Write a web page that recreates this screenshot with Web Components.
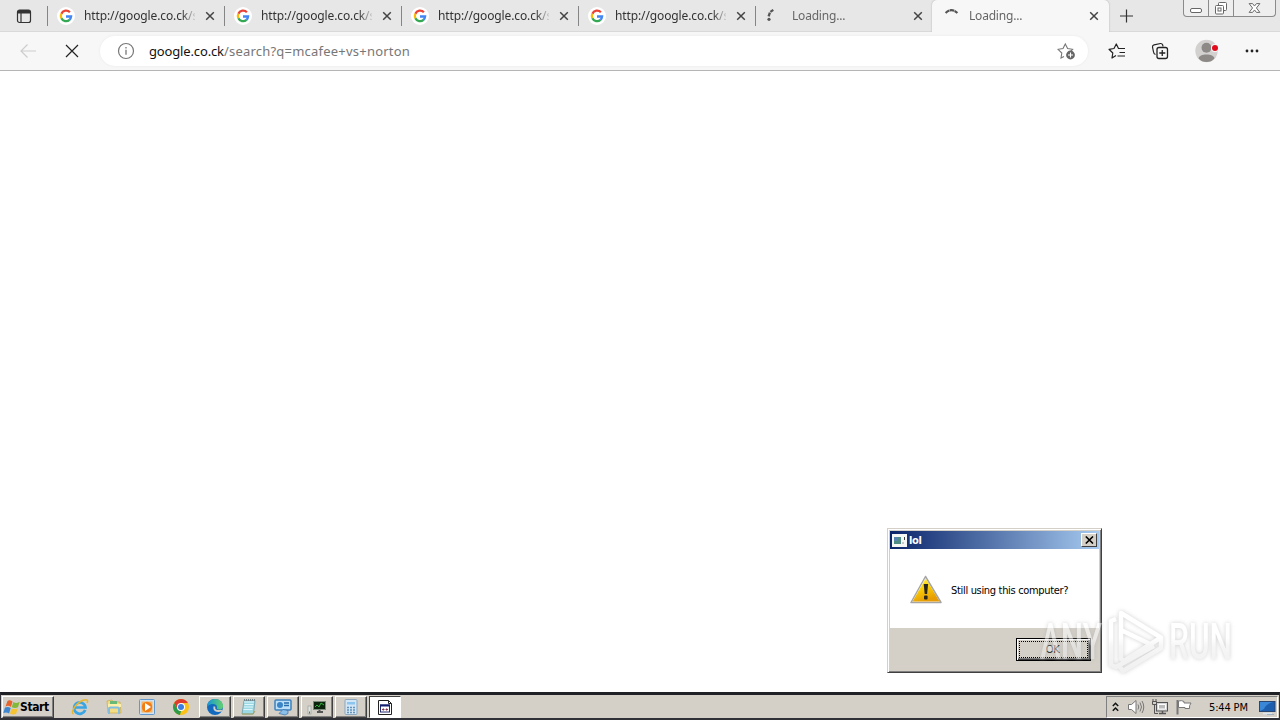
<!DOCTYPE html>
<html lang="en">
<head>
<meta charset="UTF-8">
<title>Loading...</title>
<style>
    html, body {
        margin: 0;
        width: 1280px;
        height: 720px;
        overflow: hidden;
        background: #fff;
    }
</style>
</head>
<body>
<desktop-screen>
    <edge-browser>
        <tab-strip slot="tabs">
            <browser-tab icon="google">http://google.co.ck/s</browser-tab>
            <browser-tab icon="google">http://google.co.ck/s</browser-tab>
            <browser-tab icon="google">http://google.co.ck/s</browser-tab>
            <browser-tab icon="google">http://google.co.ck/s</browser-tab>
            <browser-tab icon="spinA" loading>Loading...</browser-tab>
            <browser-tab icon="spinB" loading active>Loading...</browser-tab>
        </tab-strip>
        <address-bar slot="toolbar" data-host="google.co.ck" data-path="/search?q=mcafee+vs+norton"></address-bar>
    </edge-browser>
    <message-box slot="window" caption="lol" button="OK">Still using this computer?</message-box>
    <any-watermark slot="window"></any-watermark>
    <task-bar slot="taskbar"></task-bar>
</desktop-screen>

<script>
const ICONS = {
    tabActions: [16, 16, `<rect x="1.5" y="2" width="13" height="12.5" rx="2" fill="none" stroke="#333" stroke-width="1.2"/><path d="M1.5 5.5V4a2 2 0 0 1 2-2h9a2 2 0 0 1 2 2v1.5z" fill="#333"/><path d="M5 5v9" stroke="#333" stroke-width="1.2"/>`],
    google: [18, 18, `<circle cx="9" cy="9" r="9" fill="#fff"/><g fill="none" stroke-width="2.3"><path d="M12.9 5.3A5.1 5.1 0 0 0 4.4 6.8" stroke="#ea4335"/><path d="M4.4 6.8a5.1 5.1 0 0 0 0 4.5" stroke="#fbbc05"/><path d="M4.4 11.2a5.1 5.1 0 0 0 8.1 1.6" stroke="#34a853"/><path d="M12.4 12.9a5 5 0 0 0 1.7-3.4H9" stroke="#4285f4"/></g>`],
    spinA: [18, 18, `<path d="M8.3 2.9L5.4 4.9M4.9 5.600L3.600 9.300" stroke="#555" stroke-width="2.3" fill="none"/><circle cx="4" cy="12.300" r="1.600" fill="#555"/>`],
    spinB: [18, 18, `<path d="M3.6 6Q9.500 .4 15.400 6" stroke="#555" stroke-width="2.2" fill="none" stroke-dasharray="4.500 .4"/>`],
    close: [10, 10, `<path d="M1.2 1.2l7.6 7.6M8.8 1.2L1.2 8.8" stroke="#444" stroke-width="1.5"/>`],
    plus: [14, 14, `<path d="M6.500 .5v13M0 7h13" stroke="#333" stroke-width="1.2"/>`],
    back: [18, 16, `<path d="M17 8H2M8.5 1.5L2 8l6.500 6.500" stroke="#cdcdcd" stroke-width="1.2" fill="none"/>`],
    stop: [14, 14, `<path d="M1 1l12 12M13 1L1 13" stroke="#222" stroke-width="1.2"/>`],
    info: [18, 18, `<circle cx="9" cy="9" r="7.5" fill="none" stroke="#777" stroke-width="1.2"/><path d="M9 7.8v5M9 5v1.500" stroke="#777" stroke-width="1.3"/>`],
    starAdd: [18, 18, `<path d="M7 14.500L4 16l.8-5L1 7.300l5-.8L8.300 2l2.300 4.500 5 .8-2 2" fill="none" stroke="#777" stroke-width="1.1"/><circle cx="13.500" cy="13" r="4.400" fill="#666"/><path d="M13.500 10.500v5M11 13h5" stroke="#fff" stroke-width="1.1"/>`],
    favorites: [18, 18, `<path d="M8 13.500L4 16l.8-5L1 7.300l5-.8L8.300 2l2.200 4.500H17M11.500 10.500H17M9.500 14H17" fill="none" stroke="#222" stroke-width="1.2" stroke-linejoin="round"/>`],
    collections: [18, 18, `<path d="M4.500 12.500C3 12 2.600 11 2.400 9.500L1.500 5c-.1-1.200.5-2 1.500-2.200L9.500 1.500c1.100-.1 1.800.4 2.200 1.500l.3 1.500" fill="none" stroke="#222" stroke-width="1.2"/><rect x="6" y="5.500" width="10.500" height="11" rx="2" fill="none" stroke="#222" stroke-width="1.3"/><path d="M11.250 8v6M8.300 11h6" stroke="#222" stroke-width="1.3"/>`],
    profile: [24, 24, `<circle cx="11.500" cy="12" r="11.200" fill="#d3d1cf"/><circle cx="11.500" cy="8.800" r="5" fill="#8c8987"/><path d="M3.600 19.600C3.600 14 19.400 14 19.400 19.600Q16.400 23.100 11.500 23.100T3.600 19.600z" fill="#8c8987"/><circle cx="20" cy="9" r="4" fill="#f7f7f7"/><circle cx="20" cy="9" r="3" fill="#e00b1c"/>`],
    more: [16, 4, `<g fill="#222"><circle cx="3" cy="2" r="1.400"/><circle cx="8" cy="2" r="1.400"/><circle cx="13" cy="2" r="1.400"/></g>`],
    // classic dialog
    dialogApp: [15, 13, `<path d="M0 0h15v13H0z" fill="#f5f7f5"/><path d="M2 3h7v7H2z" fill="#508c86"/><path d="M2 3h4v4H2z" fill="#5783b0"/><path d="M12.500 3v3M10.500 9h1" stroke="#444"/>`],
    dialogClose: [9, 8, `<path d="M.8 .5L8 7.500M8 .5L.8 7.500" stroke="#000" stroke-width="1.6"/>`],
    warning: [32, 30, `<defs><linearGradient id="w" y1="0" y2="1" x2=".4"><stop stop-color="#fff36d"/><stop offset=".45" stop-color="#fcd408"/><stop offset="1" stop-color="#e79c05"/></linearGradient></defs><path d="M15.500 1.500L1 27.500h30z" fill="#fff" stroke="#a5a5a5" stroke-width="1.500" stroke-linejoin="round"/><path d="M15.700 3.500L2.500 26.500h27z" fill="url(#w)"/><path d="M13.700 9h4.400l-1 10h-2.400z" fill="#29261c"/><rect x="14" y="20.500" width="3.600" height="4" rx="1" fill="#29261c"/>`],
    // taskbar
    windows: [17, 17, `<path d="M4.500 2Q6.500 .5 9.500 2.500L8 8Q5.500 6 2.500 7.500z" fill="#e8622b"/><path d="M10.300 3Q13.500 5 16.700 2.800l-1.700 5.500Q12 9.800 8.800 8.300z" fill="#83b83b"/><path d="M2 8.500Q5 7.200 7.700 8.900l-1.600 5.500Q3.300 12.600.3 14z" fill="#3e86cf"/><path d="M8.500 9.400Q11.500 10.800 14.800 9.200l-1.700 5.500Q10 16.300 7 14.500z" fill="#f6c331"/>`],
    ie: [18, 18, `<path d="M14.200 12A5.700 5.700 0 1 1 14.500 9.500H4.500" fill="none" stroke="#3aa5e3" stroke-width="2.700"/><path d="M2.500 16C-1 14.500 5 5 12 2.300 16 .8 17.500 2.300 16 5" fill="none" stroke="#e8b62d" stroke-width="1.500"/>`],
    explorer: [18, 18, `<path d="M2 3l5-1 1 2h7l1 11H3z" fill="#f3dc83" stroke="#c9a745" stroke-width=".7"/><path d="M5 3h7v3H5z" fill="#69b977"/><path d="M3 6h13v3H3z" fill="#fff0a9"/><path d="M4 16v-5q0-1.500 1.500-1.500h7q1.500 0 1.500 1.500v5" fill="none" stroke="#82bde2" stroke-width="2"/>`],
    media: [18, 18, `<rect x="1.500" y="1.500" width="15" height="15" rx="1" fill="#cfe3f5" stroke="#6199ce"/><rect x="3.500" y="3.500" width="11" height="11" fill="#f9b35c"/><circle cx="9" cy="9" r="5.200" fill="#f07d16"/><path d="M7 5l6 4-6 4z" fill="#fff"/>`],
    chrome: [18, 18, `<circle cx="9" cy="9" r="8" fill="#fbc116"/><path d="M2.100 5A8 8 0 0 1 15.900 5H9L5.500 11z" fill="#df3c2f"/><path d="M2.100 5L5.500 11 9 13l-1 4A8 8 0 0 1 2.100 5z" fill="#2b9b4b"/><circle cx="9" cy="9" r="4" fill="#fff"/><circle cx="9" cy="9" r="3" fill="#3b7de0"/>`],
    edge: [18, 18, `<defs><linearGradient id="e"><stop stop-color="#1794d7"/><stop offset="1" stop-color="#64d36b"/></linearGradient></defs><circle cx="9" cy="9" r="8" fill="#1269bd"/><path d="M1 9C1 4.500 4.500 1 9 1c5 0 8 3.500 8 7 0 3-2.500 4-5 3.500-1.700-.4-1-1.500-1-2.500 0-2-2-3-4-3-3 0-5 1.500-6 3z" fill="url(#e)"/><path d="M8.500 8.500C7.500 12 10 14 16 12.500" stroke="#d4d0c8" stroke-width="1.800" fill="none"/>`],
    notepad: [18, 18, `<path d="M4 2.500h11L13.500 16H2z" fill="#9dd8e5" stroke="#6a9eac" stroke-width=".8"/><path d="M4 4h10M4.500 6.500h9M4 9h9M3.500 11.500h9" stroke="#dff7fb"/><path d="M4 2h11" stroke="#70858c" stroke-width="2" stroke-dasharray="1 1"/><path d="M2 16h11l2-3" stroke="#a8a15f" fill="none"/>`],
    control: [20, 18, `<rect x="2" y="2" width="16" height="10" rx="1" fill="#bce0f7" stroke="#3e80bd" stroke-width="1.500"/><circle cx="7" cy="7" r="3" fill="#3b84c7"/><path d="M11 5h5M11 7.500h5" stroke="#246cad" stroke-width="1.300"/><path d="M6 15.500l4-4 5 1v3l-3 1.500z" fill="#8bc0ea" stroke="#396fa4" stroke-width=".7"/>`],
    monitor: [20, 18, `<rect x="6.500" y="3.500" width="12" height="8" fill="#0b230d" stroke="#7b8b7b"/><path d="M8 9l2-2 2 2 2-4 3 2" fill="none" stroke="#2eb33a"/><path d="M10 14h6M12.500 12v2" stroke="#555" stroke-width="2"/><rect x="1" y="8" width="3" height="8" fill="#e0e5df" stroke="#8d958c" stroke-width=".6"/><path d="M2 14.500h1" stroke="#19982c" stroke-width="2"/>`],
    calc: [16, 18, `<rect x="2" y="1.500" width="12" height="15" rx="1" fill="#d3e6f5" stroke="#8aa7be"/><path d="M4 4h8v2.500H4z" fill="#8bc5ee"/><path d="M4 9.500h8M4 12h8M4 14.500h8" stroke="#6294bd" stroke-width="1.500" stroke-dasharray="2 1"/>`],
    script: [16, 18, `<path d="M1.500 2.500h10l3 3v11h-13z" fill="#fff" stroke="#222"/><path d="M11.500 2.500v3h3" fill="none" stroke="#222"/><rect x="3.500" y="7" width="9" height="7" fill="#fff" stroke="#222b70"/><path d="M3 7.500h10" stroke="#15216f" stroke-width="2"/><path d="M5 11.500h2.500M8.500 11.500H11M6.300 10.300v2.400M9.700 10.300v2.400" stroke="#803048" stroke-width=".9"/>`],
    chevrons: [7, 10, `<path d="M.8 4l2.700-2.700L6.200 4M.8 8.700L3.500 6l2.700 2.700" fill="none" stroke="#111" stroke-width="1.500"/>`],
    sound: [18, 16, `<path d="M1.500 5.500h3L9 1.500v13L4.500 10.500h-3z" fill="#fff" stroke="#777"/><path d="M11 5.500q1.500 2.500 0 5M13 3.500q3 4.500 0 9M15 2q3.500 6 0 12" fill="none" stroke="#777" stroke-width="1"/>`],
    network: [18, 18, `<rect x="5.500" y="4.500" width="11" height="8.500" fill="#d6d6d6" stroke="#555"/><path d="M7.500 6.500h7V11h-7z" fill="#bbb" stroke="#fff"/><path d="M8 15.500h7M11.500 13v2" stroke="#555" stroke-width="1.500"/><path d="M2 1v3M5 1v3M1.500 3.500h4v3h-4zM3.500 6.500v9H7" fill="none" stroke="#555"/>`],
    flag: [18, 16, `<path d="M2.500 1v14.500" stroke="#777" stroke-width="2"/><path d="M3.500 2q3-1 5.500.5V4h7q-2 2.500-1.500 5.500H10V8.500H3.500z" fill="#fff" stroke="#777"/>`],
    showDesktop: [17, 15, `<rect x=".5" y="1.500" width="15.500" height="10" fill="#1d5fae" stroke="#2b4771"/><path d="M1 2h13Q7 4 5 9L1 11z" fill="#3a86d7"/><path d="M4 13.500h9" stroke="#dfe8f2" stroke-width="1.500"/><path d="M8 15h7" stroke="#6c8fb9"/>`]
};

class UiIcon extends HTMLElement {
    constructor() {
        super();
        this.attachShadow({ mode: "open" });
    }

    connectedCallback() {
        const [w, h, body] = ICONS[this.getAttribute("name")];
        this.shadowRoot.innerHTML = `
            <style>
                :host { display: inline-flex; flex: none; }
                svg { display: block; }
            </style>
            <svg width="${w}" height="${h}" viewBox="0 0 ${w} ${h}">${body}</svg>
        `;
    }
}

class DesktopScreen extends HTMLElement {
    constructor() {
        super();
        this.attachShadow({ mode: "open" });
        this.shadowRoot.innerHTML = `
            <style>
                :host {
                    display: flex;
                    flex-direction: column;
                    position: relative;
                    width: 1280px;
                    height: 720px;
                    background: #fff;
                    font-family: "DejaVu Sans Condensed", "DejaVu Sans", sans-serif;
                }
                .work { flex: 1; min-height: 0; }
            </style>
            <div class="work"><slot></slot></div>
            <slot name="taskbar"></slot>
            <slot name="window"></slot>
        `;
    }
}

class EdgeBrowser extends HTMLElement {
    constructor() {
        super();
        this.attachShadow({ mode: "open" });
        this.shadowRoot.innerHTML = `
            <style>
                :host {
                    display: flex;
                    flex-direction: column;
                    height: 100%;
                    font-family: "Noto Sans", "Open Sans", sans-serif;
                }
                main { flex: 1; background: #fff; }
            </style>
            <slot name="tabs"></slot>
            <slot name="toolbar"></slot>
            <main></main>
        `;
    }
}

class TabStrip extends HTMLElement {
    constructor() {
        super();
        this.attachShadow({ mode: "open" });
        this.shadowRoot.innerHTML = `
            <style>
                :host {
                    display: flex;
                    height: 32px;
                    background: #e7e7e7;
                    box-shadow: inset 0 -1px #d9d9d9;
                }
                .actions {
                    width: 47px;
                    display: flex;
                    align-items: center;
                    justify-content: center;
                }
                .new-tab { margin: 9px 0 0 11px; }
                .caption {
                    display: flex;
                    box-sizing: border-box;
                    width: 93px;
                    height: 17px;
                    margin-left: auto;
                    margin-right: 4px;
                    border: 1px solid #8b8b8b;
                    border-top: 0;
                    border-radius: 0 0 4px 4px;
                    background: #eee;
                }
                .caption span { flex: 0 0 24px; border-right: 1px solid #8b8b8b; }
                .caption span:last-child { flex: 1; border: 0; }
                .caption svg { display: block; width: 100%; height: 16px; }
            </style>
            <div class="actions"><ui-icon name="tabActions"></ui-icon></div>
            <slot></slot>
            <ui-icon class="new-tab" name="plus"></ui-icon>
            <div class="caption">
                <span><svg viewBox="0 0 24 16"><rect x="6.500" y="8.500" width="11" height="4" rx="1.500" fill="#fff" stroke="#666"/></svg></span>
                <span><svg viewBox="0 0 24 16"><g fill="#fff" stroke="#666"><rect x="9.500" y="2.500" width="8" height="8" rx="1"/><rect x="6.500" y="5.500" width="8" height="8.500" rx="1"/><rect x="9" y="8" width="3" height="3"/></g></svg></span>
                <span><svg viewBox="0 0 42 16"><path d="M15.500 3.500h3.500l2 2.500 2-2.500h3.500L23 8l3.500 4.500H23L21 10l-2 2.500h-3.500L19 8z" fill="#fff" stroke="#666"/></svg></span>
            </div>
        `;
    }
}

class BrowserTab extends HTMLElement {
    constructor() {
        super();
        this.attachShadow({ mode: "open" });
    }

    connectedCallback() {
        this.shadowRoot.innerHTML = `
            <style>
                :host {
                    display: flex;
                    align-items: center;
                    box-sizing: border-box;
                    flex: none;
                    width: 177px;
                    height: 32px;
                    padding: 0 9px 0 10px;
                    color: #333;
                    font-size: 12px;
                    background: linear-gradient(#858585, #858585) 0 6px / 1px 20px no-repeat;
                }
                :host([loading]) { color: #666; }
                :host([active]) {
                    background: #f7f7f7;
                    border-radius: 5px 5px 0 0;
                    box-shadow: 0 0 2px #aaa;
                    clip-path: inset(0 -3px 0 -3px);
                }
                :host([active]) .close { margin-right: 1px; }
                .title {
                    width: 111px;
                    margin-left: 9px;
                    overflow: hidden;
                    white-space: nowrap;
                    line-height: 18px;
                    letter-spacing: -0.12px;
                    mask-image: linear-gradient(90deg, #000 98px, transparent 113px);
                }
                :host([loading]) .title { letter-spacing: -0.2px; }
                .close { margin-left: auto; }
            </style>
            <ui-icon name="${this.getAttribute("icon")}"></ui-icon>
            <div class="title"><slot></slot></div>
            <ui-icon class="close" name="close"></ui-icon>
        `;
    }
}

class AddressBar extends HTMLElement {
    constructor() {
        super();
        this.attachShadow({ mode: "open" });
        this.shadowRoot.innerHTML = `
            <style>
                :host {
                    display: flex;
                    align-items: center;
                    box-sizing: border-box;
                    height: 39px;
                    padding: 0 20px 0 19px;
                    background: #f7f7f7;
                    border-bottom: 1px solid #b5b5b5;
                }
                .stop { margin: 0 21px 0 28px; }
                .field {
                    display: flex;
                    align-items: center;
                    box-sizing: border-box;
                    width: 988px;
                    height: 30px;
                    padding: 0 13px 0 17px;
                    border-radius: 15px;
                    background: #fff;
                    box-shadow: 0 0 3px #e9e9e9;
                }
                .url {
                    margin-left: 14px;
                    color: #777;
                    font-size: 13px;
                    line-height: 20px;
                    white-space: nowrap;
                    letter-spacing: 0.22px;
                }
                .host { color: #111; letter-spacing: -0.15px; }
                .field ui-icon:last-child { margin-left: auto; }
                .buttons {
                    flex: 1;
                    display: flex;
                    align-items: center;
                    justify-content: space-between;
                    margin-left: 20px;
                }
            </style>
            <ui-icon name="back"></ui-icon>
            <ui-icon class="stop" name="stop"></ui-icon>
            <div class="field">
                <ui-icon name="info"></ui-icon>
                <div class="url"><span class="host">${this.dataset.host}</span><span>${this.dataset.path}</span></div>
                <ui-icon name="starAdd"></ui-icon>
            </div>
            <div class="buttons">
                <ui-icon name="favorites"></ui-icon>
                <ui-icon name="collections"></ui-icon>
                <ui-icon name="profile"></ui-icon>
                <ui-icon name="more"></ui-icon>
            </div>
        `;
    }
}

class MessageBox extends HTMLElement {
    constructor() {
        super();
        this.attachShadow({ mode: "open" });
        this.shadowRoot.innerHTML = `
            <style>
                :host {
                    position: absolute;
                    left: 887px;
                    top: 528px;
                    display: flex;
                    flex-direction: column;
                    box-sizing: border-box;
                    width: 215px;
                    height: 145px;
                    padding: 2px;
                    border: 1px solid #d4d0c8;
                    border-right-color: #404040;
                    border-bottom-color: #404040;
                    background: #d4d0c8;
                    box-shadow: inset 1px 1px #fff, inset -1px -1px #808080;
                    font-size: 11px;
                    color: #000;
                }
                header {
                    display: flex;
                    align-items: center;
                    box-sizing: border-box;
                    height: 18px;
                    padding: 0 2px 0 2px;
                    background: linear-gradient(90deg, #0a246a, #a6caf0);
                    color: #fff;
                    font-weight: bold;
                }
                header b { margin-left: 2px; letter-spacing: -0.3px; }
                .close {
                    display: flex;
                    align-items: center;
                    justify-content: center;
                    box-sizing: border-box;
                    width: 16px;
                    height: 14px;
                    margin-left: auto;
                    background: #d4d0c8;
                    border: 1px solid;
                    border-color: #fff #404040 #404040 #fff;
                }
                .body {
                    display: flex;
                    align-items: center;
                    box-sizing: border-box;
                    height: 79px;
                    padding: 3px 0 0 20px;
                    background: #fff;
                }
                .message {
                    margin-left: 9px;
                    white-space: nowrap;
                    letter-spacing: -0.32px;
                }
                footer {
                    display: flex;
                    flex: 1;
                    align-items: center;
                    justify-content: flex-end;
                    padding-right: 8px;
                    background: #d4d0c8;
                }
                button {
                    box-sizing: border-box;
                    width: 75px;
                    height: 23px;
                    padding: 2px;
                    background: #d4d0c8;
                    border: 1px solid #000;
                    box-shadow: inset 1px 1px #fff, inset -1px -1px #404040, inset -2px -2px #808080;
                    font: inherit;
                    color: #000;
                }
                button span {
                    display: block;
                    border: 1px dotted #000;
                    height: 15px;
                    line-height: 15px;
                    padding-right: 2px;
                    letter-spacing: -0.5px;
                }
            </style>
            <header>
                <ui-icon name="dialogApp"></ui-icon>
                <b>${this.getAttribute("caption")}</b>
                <div class="close"><ui-icon name="dialogClose"></ui-icon></div>
            </header>
            <div class="body">
                <ui-icon name="warning"></ui-icon>
                <div class="message"><slot></slot></div>
            </div>
            <footer><button><span>${this.getAttribute("button")}</span></button></footer>
        `;
    }
}

class AnyWatermark extends HTMLElement {
    constructor() {
        super();
        this.attachShadow({ mode: "open" });
        this.shadowRoot.innerHTML = `
            <style>
                :host {
                    position: absolute;
                    left: 1038px;
                    top: 602px;
                    width: 200px;
                    height: 76px;
                    pointer-events: none;
                    opacity: 0.55;
                    filter: drop-shadow(0 0 2px #aaa);
                }
                svg { display: block; overflow: visible; }
                text { font-family: Roboto, sans-serif; font-size: 50px; font-weight: 500; fill: url(#fade); }
            </style>
            <svg width="200" height="76" viewBox="0 0 200 76">
                <defs>
                    <linearGradient id="fade" gradientUnits="userSpaceOnUse" x1="0" y1="10" x2="0" y2="68">
                        <stop offset=".45" stop-color="#fff"/>
                        <stop offset=".6" stop-color="#eee"/>
                        <stop offset="1" stop-color="#e6e6e6"/>
                    </linearGradient>
                </defs>
                <text x="2" y="57" textLength="62" lengthAdjust="spacingAndGlyphs">ANY</text>
                <g fill="none" stroke="url(#fade)" stroke-width="4.500" stroke-linejoin="round">
                    <path d="M83 39V11l40 24.500-37 23.500-3-2V28l31 15"/>
                    <path d="M78 17l-5 2v44l5 2 38-21M82 65l3 4 38-23V36"/>
                </g>
                <text x="131" y="57" textLength="63" lengthAdjust="spacingAndGlyphs">RUN</text>
            </svg>
        `;
    }
}

class TaskBar extends HTMLElement {
    constructor() {
        super();
        this.attachShadow({ mode: "open" });

        const pinned = ["ie", "explorer", "media", "chrome"];
        const running = ["edge", "notepad", "control", "monitor", "calc", "script"];

        this.shadowRoot.innerHTML = `
            <style>
                :host {
                    display: flex;
                    box-sizing: border-box;
                    height: 28px;
                    padding: 0 1px;
                    border-top: 3px solid #202126;
                    border-bottom: 2px solid #303136;
                    border-left: 1px solid #303136;
                    border-right: 1px solid #303136;
                    background: #d4d0c8;
                    font-size: 11px;
                    color: #000;
                }
                .start {
                    display: flex;
                    align-items: center;
                    box-sizing: border-box;
                    width: 52px;
                    height: 22px;
                    margin-top: 1px;
                    border: 1px solid;
                    border-color: #fff #404040 #404040 #fff;
                    box-shadow: inset -1px -1px #808080;
                    font-weight: bold;
                    font-size: 12px;
                    letter-spacing: -0.4px;
                    white-space: nowrap;
                }
                .pinned { display: flex; margin-left: 9px; }
                .pinned span {
                    display: flex;
                    width: 33.75px;
                    align-items: center;
                    justify-content: center;
                }
                .running { display: flex; gap: 2px; margin: 1px 0 0 1px; }
                .running span {
                    display: flex;
                    align-items: center;
                    justify-content: center;
                    box-sizing: border-box;
                    width: 32px;
                    height: 22px;
                    border: 1px solid;
                    border-color: #fff #404040 #404040 #fff;
                    box-shadow: inset -1px -1px #808080;
                }
                .running span:last-child {
                    background: #fff;
                    border-color: #404040 #fff #fff #404040;
                    box-shadow: none;
                }
                .tray {
                    display: flex;
                    align-items: center;
                    box-sizing: border-box;
                    width: 172px;
                    height: 22px;
                    margin: 1px 0 0 auto;
                    padding-left: 5px;
                    border: 1px solid;
                    border-color: #808080 #fff #fff #808080;
                }
                .chevrons { margin-bottom: 1px; }
                .sound { margin-left: 8px; }
                .network, .flag { margin-left: 6px; }
                time { margin-left: 16px; letter-spacing: -0.15px; white-space: nowrap; }
                .show { margin: 0 1px 0 auto; }
            </style>
            <div class="start"><ui-icon name="windows"></ui-icon>Start</div>
            <div class="pinned">${pinned.map(n => `<span><ui-icon name="${n}"></ui-icon></span>`).join("")}</div>
            <div class="running">${running.map(n => `<span><ui-icon name="${n}"></ui-icon></span>`).join("")}</div>
            <div class="tray">
                <ui-icon class="chevrons" name="chevrons"></ui-icon>
                <ui-icon class="sound" name="sound"></ui-icon>
                <ui-icon class="network" name="network"></ui-icon>
                <ui-icon class="flag" name="flag"></ui-icon>
                <time>5:44 PM</time>
                <ui-icon class="show" name="showDesktop"></ui-icon>
            </div>
        `;
    }
}

customElements.define("ui-icon", UiIcon);
customElements.define("browser-tab", BrowserTab);
customElements.define("tab-strip", TabStrip);
customElements.define("address-bar", AddressBar);
customElements.define("edge-browser", EdgeBrowser);
customElements.define("message-box", MessageBox);
customElements.define("any-watermark", AnyWatermark);
customElements.define("task-bar", TaskBar);
customElements.define("desktop-screen", DesktopScreen);
</script>
</body>
</html>
